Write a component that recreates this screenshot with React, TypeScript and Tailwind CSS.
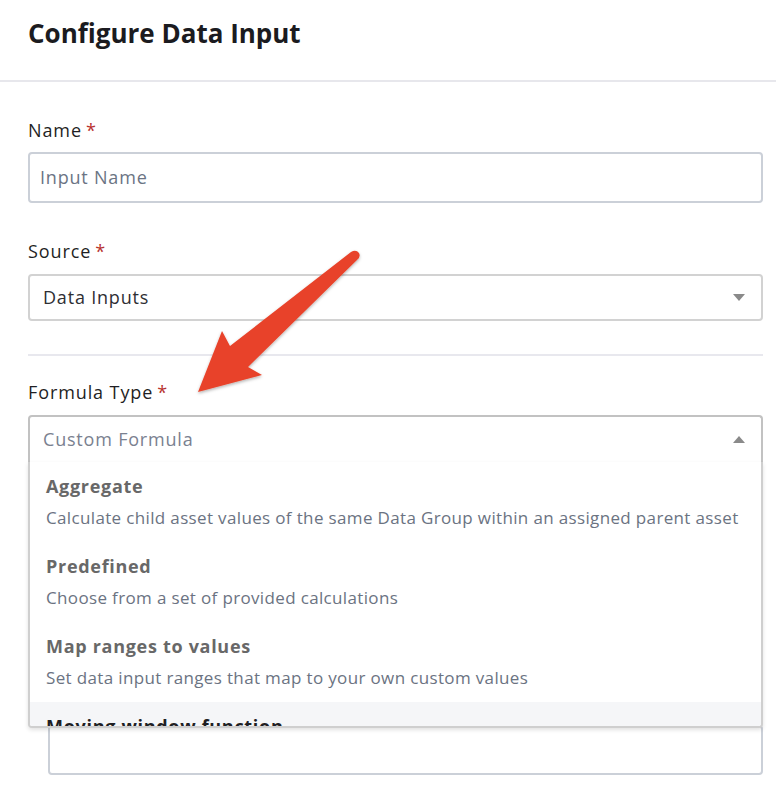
import React from "react";

const baseFont = { fontFamily: '"Open Sans", "Noto Sans", sans-serif' };

function Label({ children }: { children: React.ReactNode }) {
  return (
    <div className="flex h-6 items-center text-[18px] font-medium tracking-[0.9px] text-[#1f1f24]">
      {children}
      <span className="ml-1 text-[#b8322f]">*</span>
    </div>
  );
}

function Caret({ up }: { up?: boolean }) {
  return (
    <svg width="12" height="7" viewBox="0 0 12 7" className="fill-[#8a8a8a]">
      {up ? <path d="M0 7 L6 0 L12 7 Z" /> : <path d="M0 0 L12 0 L6 7 Z" />}
    </svg>
  );
}

const options = [
  {
    title: "Aggregate",
    desc: "Calculate child asset values of the same Data Group within an assigned parent asset",
  },
  { title: "Predefined", desc: "Choose from a set of provided calculations" },
  { title: "Map ranges to values", desc: "Set data input ranges that map to your own custom values" },
];

function Arrow() {
  return (
    <svg
      className="pointer-events-none absolute left-0 top-0"
      width="776"
      height="804"
      viewBox="0 0 776 804"
    >
      <defs>
        <filter id="sh" x="-20%" y="-20%" width="140%" height="140%">
          <feDropShadow dx="0" dy="1.5" stdDeviation="1.5" floodColor="#000" floodOpacity="0.3" />
        </filter>
      </defs>
      <path
        d="M198 392 L222 331 L230 346 L351 252 Q356 249 359 253 Q361 257 357 260 L248 367 L262 375 Z"
        fill="#e8432a"
        filter="url(#sh)"
      />
    </svg>
  );
}

export default function App() {
  return (
    <div className="relative h-[804px] w-[776px] overflow-hidden bg-white" style={baseFont}>
      <div className="h-[82px] border-b-2 border-[#e7e7ec] px-7 pt-[17px]">
        <h1 className="text-[26px] leading-8 font-bold text-[#1b1b20]">Configure Data Input</h1>
      </div>

      <div className="pl-7 pr-[13px] pt-[36px]">
        <Label>Name</Label>
        <div className="mt-[10px] flex h-[51px] items-center rounded border-2 border-[#cbd0d8] px-[10px] text-[18px] tracking-[0.8px] text-[#6b7484]">
          Input Name
        </div>

        <div className="mt-[36px]">
          <Label>Source</Label>
        </div>
        <div className="mt-[11px] flex h-[47px] items-center justify-between rounded border-2 border-[#d2d2d2] pl-[13px] pr-4 text-[18px] tracking-[0.8px] text-[#2e2e33]">
          <span>Data Inputs</span>
          <Caret />
        </div>

        <div className="mt-[33px] h-[2px] bg-[#e8e8ee]" />

        <div className="mt-[24px]">
          <Label>Formula Type</Label>
        </div>
        <div className="relative mt-[11px]">
          <div className="flex h-[48px] items-center justify-between rounded-t border-2 border-b border-[#c2c2c2] border-b-[#e2e2e2] pl-[13px] pr-4 text-[18px] tracking-[0.8px] text-[#7a8190]">
            <span>Custom Formula</span>
            <Caret up />
          </div>

          <div className="pl-5 pt-[262px]">
            <div className="h-[50px] rounded border-2 border-[#cbd0d8]" />
          </div>

          <div className="absolute left-0 right-0 top-[47px] h-[266px] overflow-hidden rounded-b border-2 border-t-0 border-[#cfcfcf] bg-white shadow-[0_2px_4px_rgba(0,0,0,0.12)]">
            {options.map((o) => (
              <div key={o.title} className="px-4 pt-[12px] pb-[12px]">
                <div className="h-6 text-[18px] leading-6 font-bold tracking-[0.7px] text-[#686868]">{o.title}</div>
                <div className="mt-2 h-6 text-[17px] leading-6 tracking-[0.35px] whitespace-nowrap text-[#6b7382]">{o.desc}</div>
              </div>
            ))}
            <div className="bg-[#f5f6f8] px-4 pt-[12px] pb-[12px]">
              <div className="h-6 text-[18px] leading-6 font-bold tracking-[0.7px] text-[#1f1f24]">Moving window function</div>
            </div>
          </div>
        </div>
      </div>

      <Arrow />
    </div>
  );
}
